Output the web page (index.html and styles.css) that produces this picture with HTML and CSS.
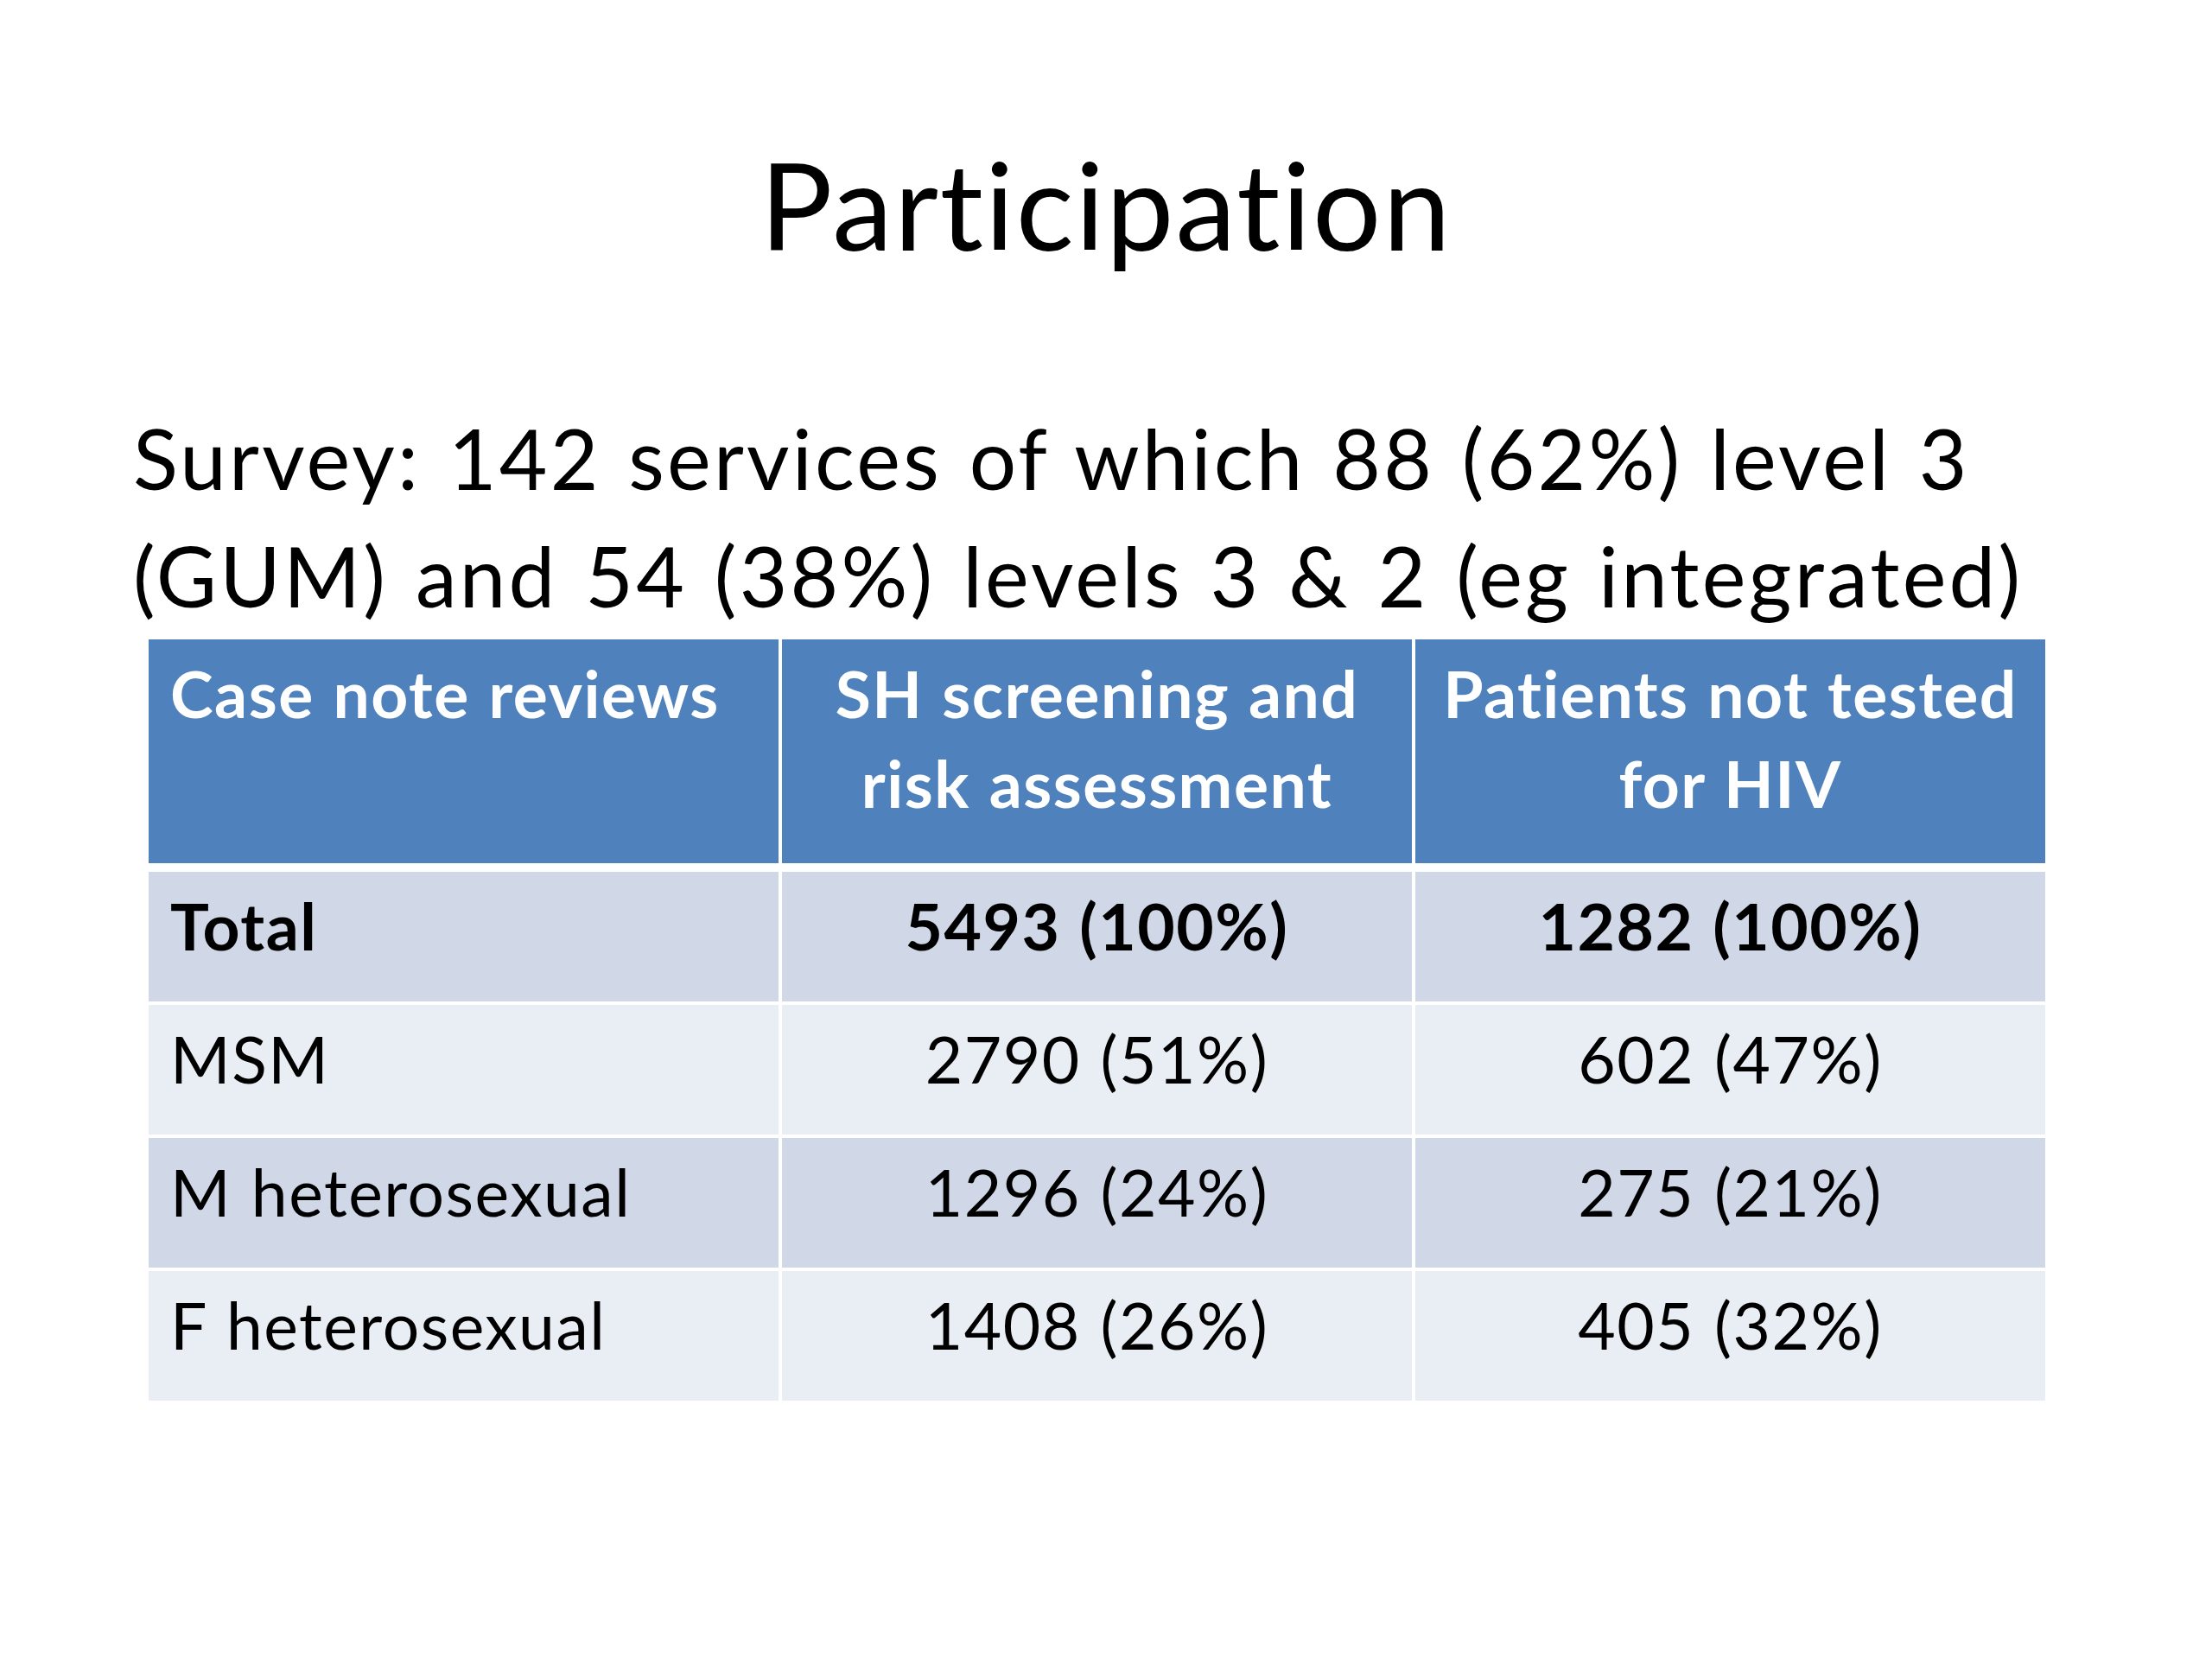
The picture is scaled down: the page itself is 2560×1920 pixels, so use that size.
FILE: index.html
```html
<!DOCTYPE html>
<html lang="en">
<head>
<meta charset="utf-8">
<title>Participation</title>
<link rel="stylesheet" href="styles.css">
</head>
<body>
<div class="slide">
  <h1 class="title">Participation</h1>
  <p class="lead">Survey: 142 services of which 88 (62%) level 3<br>(GUM) and 54 (38%) levels 3 &amp; 2 (eg integrated)</p>
  <div class="table">
    <div class="cell head left">Case note reviews</div>
    <div class="cell head center">SH screening and<br>risk assessment</div>
    <div class="cell head center">Patients not tested<br>for HIV</div>

    <div class="cell dark left bold first">Total</div>
    <div class="cell dark center bold first">5493 (100%)</div>
    <div class="cell dark center bold first">1282 (100%)</div>

    <div class="cell light left">MSM</div>
    <div class="cell light center">2790 (51%)</div>
    <div class="cell light center">602 (47%)</div>

    <div class="cell dark left">M heterosexual</div>
    <div class="cell dark center">1296 (24%)</div>
    <div class="cell dark center">275 (21%)</div>

    <div class="cell light left">F heterosexual</div>
    <div class="cell light center">1408 (26%)</div>
    <div class="cell light center">405 (32%)</div>
  </div>
</div>
</body>
</html>
```

FILE: styles.css
```css
html, body {
  margin: 0;
  padding: 0;
  background: #ffffff;
}

body {
  width: 2560px;
  height: 1920px;
  overflow: hidden;
  font-family: Lato, "Open Sans", "Liberation Sans", sans-serif;
  font-variant-ligatures: none;
  color: #000;
}

.slide {
  width: 2560px;
  height: 1920px;
  padding-top: 152px;
  box-sizing: border-box;
}

.title {
  margin: 0;
  font-weight: 400;
  font-size: 140px;
  line-height: 168px;
  letter-spacing: 2px;
  text-align: center;
  white-space: nowrap;
}

.lead {
  margin: 142px 0 0 154px;
  font-size: 96px;
  line-height: 136px;
  letter-spacing: 3.2px;
  word-spacing: 4px;
  white-space: nowrap;
}

.table {
  margin: 6px 0 0 172px;
  width: 2195px;
  display: grid;
  grid-template-columns: repeat(3, 1fr);
  grid-template-rows: 259px 156px 150px 150px 150px;
  column-gap: 4px;
  row-gap: 4px;
}

.cell {
  box-sizing: border-box;
  padding: 10px 25px 0 25px;
  font-size: 75px;
  line-height: 104px;
  letter-spacing: 1.5px;
  word-spacing: 2px;
  white-space: nowrap;
}

.head {
  background: #4f81bd;
  color: #ffffff;
  font-weight: 700;
}

.first {
  margin-top: 6px;
}

.dark {
  background: #d0d8e8;
}

.light {
  background: #e9edf4;
}

.bold {
  font-weight: 700;
}

.left {
  text-align: left;
}

.center {
  text-align: center;
}
```
